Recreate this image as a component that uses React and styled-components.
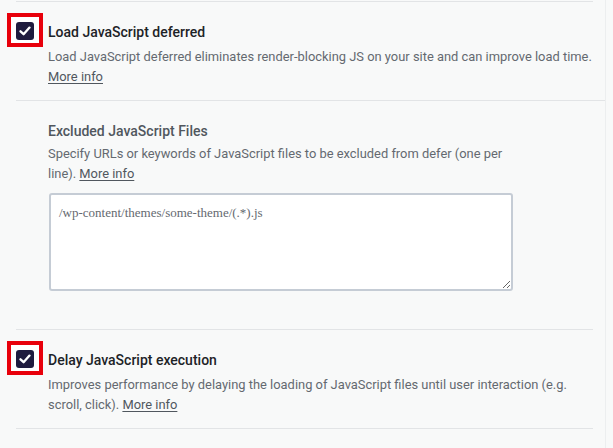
import React from 'react';
import styled, { createGlobalStyle } from 'styled-components';

const GlobalStyle = createGlobalStyle`
  html, body {
    margin: 0;
    padding: 0;
    background: #f8f9f9;
  }
  body {
    font-family: Roboto, "Noto Sans", sans-serif;
  }
`

const Page = styled.div`
  width: 606px;
  height: 448px;
  box-sizing: border-box;
  padding: 1px 0 0 16px;
  border-right: 1px solid #eceeef;
  overflow: hidden;
`

const Section = styled.div`
  width: 577px;
  border-top: 1px solid #e2e4e6;
  display: flex;
  gap: 14px;
  padding: ${({nested}) => nested ? '20px 0 38px 32px' : '20px 0 13px 0'};
`

// red annotation frame around the checkbox
const Mark = styled.span`
  flex: none;
  align-self: flex-start;
  margin: -9px -9px 0 -9px;
  padding: 5px 5px 3px;
  border: 4px solid #e8000b;
  background: #fff;
  line-height: 0;
`

const Check = styled.span`
  width: 18px;
  height: 18px;
  border-radius: 3px;
  background: #1f1b3e;
  display: flex;
  align-items: center;
  justify-content: center;
`

const Body = styled.div`
  flex: 1;
  margin-right: ${({narrow}) => narrow ? '0' : '-8px'};
  max-width: ${({narrow}) => narrow ? '466px' : 'none'};
`

const Title = styled.div`
  font-size: 14px;
  line-height: 20px;
  font-weight: 500;
  color: ${({muted}) => muted ? '#50575e' : '#1d2327'};
  margin-bottom: ${({muted}) => muted ? '3px' : '5px'};
`

const Desc = styled.p`
  margin: 0;
  font-size: 12.9px;
  line-height: 20px;
  color: #646970;
`

const More = styled.a`
  color: #50575e;
  text-decoration: underline;
  text-underline-offset: 2px;
`

const Area = styled.textarea`
  display: block;
  box-sizing: border-box;
  width: 464px;
  height: 98px;
  margin: 9px 0 0 1px;
  padding: 10px 8px;
  border: 2px solid #c5ccd5;
  border-radius: 3px;
  background: #fff;
  font-family: "Liberation Serif", serif;
  font-size: 13px;
  line-height: 16px;
  color: #646970;
  resize: vertical;
`

function Tick() {
  return (
    <Mark>
      <Check>
        <svg width="12" height="10" viewBox="0 0 12 10">
          <path d="M1.5 5.3 L4.6 8.2 L10.5 1.6" fill="none" stroke="#fff" strokeWidth="2.3" strokeLinecap="round" strokeLinejoin="round" />
        </svg>
      </Check>
    </Mark>
  );
}

export default function App() {
  return (
    <Page>
      <GlobalStyle />
      <Section>
        <Tick />
        <Body>
          <Title>Load JavaScript deferred</Title>
          <Desc>
            Load JavaScript deferred eliminates render-blocking JS on your site and can improve load time.{' '}
            <More href="#">More info</More>
          </Desc>
        </Body>
      </Section>
      <Section nested>
        <Body narrow>
          <Title muted>Excluded JavaScript Files</Title>
          <Desc>
            Specify URLs or keywords of JavaScript files to be excluded from defer (one per line).{' '}
            <More href="#">More info</More>
          </Desc>
          <Area defaultValue="/wp-content/themes/some-theme/(.*).js" />
        </Body>
      </Section>
      <Section>
        <Tick />
        <Body>
          <Title>Delay JavaScript execution</Title>
          <Desc>
            Improves performance by delaying the loading of JavaScript files until user interaction (e.g. scroll, click).{' '}
            <More href="#">More info</More>
          </Desc>
        </Body>
      </Section>
      <Section />
    </Page>
  );
}
